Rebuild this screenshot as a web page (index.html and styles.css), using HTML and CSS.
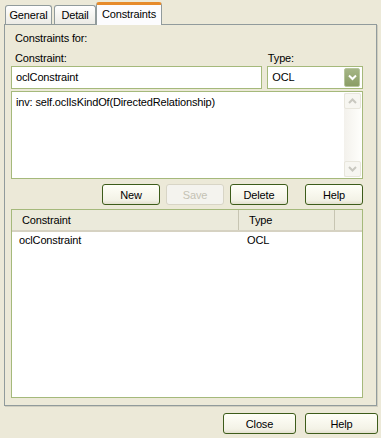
FILE: index.html
```html
<!DOCTYPE html>
<html lang="en">
<head>
  <meta charset="UTF-8">
  <title>Constraints</title>
  <link rel="stylesheet" href="styles.css">
</head>
<body>

  <!-- tabs -->
  <div class="tabs">
    <div class="tab tab-general">General</div>
    <div class="tab tab-detail">Detail</div>
    <div class="tab tab-constraints active">Constraints</div>
  </div>

  <div class="panel">
    <div class="caption">Constraints for:</div>

    <div class="row labels">
      <div class="col-name">Constraint:</div>
      <div class="col-type">Type:</div>
    </div>

    <div class="row fields">
      <div class="field col-name">oclConstraint</div>
      <div class="field combo col-type">
        <span>OCL</span>
        <span class="drop">
          <svg width="9" height="7" viewBox="0 0 9 7"><path d="M1 1.5 L4.5 5 L8 1.5" fill="none" stroke="#fff" stroke-width="2"/></svg>
        </span>
      </div>
    </div>

    <div class="memo">
      <div class="memo-text">inv: self.oclIsKindOf(DirectedRelationship)</div>
      <div class="vscroll">
        <span class="arrow">
          <svg width="9" height="6" viewBox="0 0 9 6"><path d="M1 5 L4.5 1.5 L8 5" fill="none" stroke="#c9c8c0" stroke-width="2"/></svg>
        </span>
        <span class="arrow">
          <svg width="9" height="6" viewBox="0 0 9 6"><path d="M1 1 L4.5 4.5 L8 1" fill="none" stroke="#c9c8c0" stroke-width="2"/></svg>
        </span>
      </div>
    </div>

    <div class="actions">
      <button class="btn">New</button>
      <button class="btn" disabled>Save</button>
      <button class="btn">Delete</button>
      <button class="btn help">Help</button>
    </div>

    <div class="list">
      <div class="list-head">
        <div class="hcol c1">Constraint</div>
        <div class="hcol c2">Type</div>
        <div class="hcol c3"></div>
      </div>
      <div class="list-row">
        <div class="c1">oclConstraint</div>
        <div class="c2">OCL</div>
      </div>
    </div>
  </div>

  <div class="footer">
    <button class="btn wide">Close</button>
    <button class="btn wide">Help</button>
  </div>

</body>
</html>
```

FILE: styles.css
```css
body {
  margin: 0;
  width: 381px;
  height: 438px;
  background: #ece9d8;
  font-family: Tahoma, "Liberation Sans", sans-serif;
  font-size: 11px;
  letter-spacing: -0.15px;
  color: #000;
  overflow: hidden;
}

/* tabs */
.tabs {
  display: flex;
  align-items: flex-end;
  height: 24px;
  padding-left: 5px;
  padding-top: 2px;
  box-sizing: border-box;
  position: relative;
  z-index: 1;
}
.tab {
  height: 18px;
  line-height: 18px;
  box-sizing: content-box;
  text-align: center;
  margin-right: 2px;
  border: 1px solid #919b9c;
  border-bottom: none;
  border-radius: 3px 3px 0 0;
  background: linear-gradient(#ffffff, #ecebe5);
}
.tab-general {
  width: 45px;
}
.tab-detail {
  width: 40px;
}
.tab-constraints {
  width: 64px;
}
.tab.active {
  height: 20px;
  line-height: 19px;
  margin-left: -2px;
  margin-bottom: -1px;
  border-top: 3px solid #e68b2c;
  background: #fcfcfe;
}

/* main panel */
.panel {
  margin: 0 4px;
  height: 382px;
  box-sizing: border-box;
  border: 1px solid #919b9c;
  padding: 7px 13px 0 6px;
  background: #ece9d8;
  box-shadow: 1px 1px 0 #d0cebf;
}
.caption {
  height: 13px;
  line-height: 13px;
  margin-bottom: 6px;
  padding-left: 4px;
}
.row {
  display: flex;
  gap: 5px;
}
.col-name {
  width: 252px;
}
.col-type {
  width: 96px;
}
.labels {
  height: 15px;
  line-height: 14px;
}
.labels .col-name {
  padding-left: 4px;
  box-sizing: border-box;
}
.labels .col-type {
  padding-left: 2px;
}
.field {
  height: 23px;
  box-sizing: border-box;
  border: 1px solid #a5b97b;
  background: #fff;
  line-height: 21px;
  padding-left: 4px;
}
.combo {
  display: flex;
  justify-content: space-between;
  align-items: center;
  padding-right: 2px;
}
.drop {
  width: 14px;
  height: 17px;
  background: linear-gradient(#a5b586, #8a9d65);
  border: 1px solid #b7c69c;
  border-radius: 2px;
  display: flex;
  align-items: center;
  justify-content: center;
}

/* memo */
.memo {
  margin-top: 2px;
  height: 88px;
  box-sizing: border-box;
  border: 1px solid #a5b97b;
  background: #fff;
  display: flex;
}
.memo-text {
  flex: 1;
  padding: 3px 0 0 4px;
  line-height: 14px;
}
.vscroll {
  width: 17px;
  margin: 1px;
  background: linear-gradient(90deg, #f3f1ec, #fefefb);
  display: flex;
  flex-direction: column;
  justify-content: space-between;
}
.arrow {
  height: 16px;
  box-sizing: border-box;
  border: 1px solid #e8e6dc;
  border-radius: 2px;
  background: #f7f6f1;
  display: flex;
  align-items: center;
  justify-content: center;
}

/* buttons */
.actions {
  display: flex;
  justify-content: flex-end;
  gap: 6px;
  margin-top: 5px;
  height: 21px;
}
.btn {
  font-family: inherit;
  font-size: 11px;
  letter-spacing: -0.15px;
  color: #000;
  width: 58px;
  height: 21px;
  padding: 0;
  border: 1px solid #3d5c1a;
  border-radius: 3px;
  background: linear-gradient(#fffff8, #f3f2e6 80%, #e3e0cf);
}
.btn:disabled {
  color: #c4c2b4;
  border-color: #d8d5c6;
  background: #f4f3ee;
}
.btn.help {
  margin-left: 11px;
}

/* list view */
.list {
  margin-top: 4px;
  height: 189px;
  box-sizing: border-box;
  border: 1px solid #a5b97b;
  background: #fff;
}
.list-head {
  display: flex;
  height: 20px;
  line-height: 20px;
  background: #ebeadb;
  border-bottom: 2px solid #d6d2c2;
}
.list-head .c1 {
  width: 227px;
  padding-left: 10px;
  box-sizing: border-box;
  border-right: 1px solid #c7c5b2;
}
.list-head .c2 {
  width: 96px;
  padding-left: 10px;
  box-sizing: border-box;
  border-right: 1px solid #c7c5b2;
}
.list-row {
  display: flex;
  height: 16px;
  line-height: 16px;
}
.list-row .c1 {
  width: 228px;
  padding-left: 7px;
  box-sizing: border-box;
}
.list-row .c2 {
  padding-left: 7px;
}

/* footer */
.footer {
  display: flex;
  justify-content: flex-end;
  gap: 9px;
  padding: 7px 3px 0 0;
}
.btn.wide {
  width: 73px;
}
```
